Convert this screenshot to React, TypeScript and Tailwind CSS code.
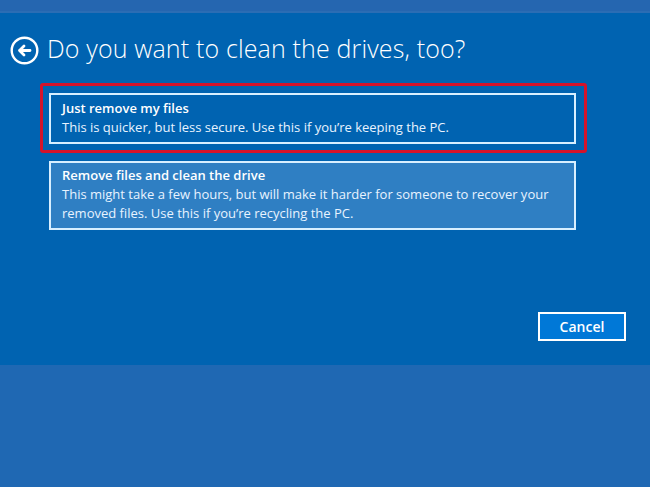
import React from 'react';

const options = [
  {
    id: 'quick',
    title: 'Just remove my files',
    lines: ["This is quicker, but less secure. Use this if you\u2019re keeping the PC."],
    selected: true,
  },
  {
    id: 'clean',
    title: 'Remove files and clean the drive',
    lines: [
      'This might take a few hours, but will make it harder for someone to recover your',
      'removed files. Use this if you\u2019re recycling the PC.',
    ],
    selected: false,
  },
];

const BackIcon = () => (
  <svg width="29" height="29" viewBox="0 0 29 29" fill="none" stroke="#ffffff" strokeWidth="2.4">
    <circle cx="14.5" cy="14.5" r="12.8" />
    <path d="M20 14.5H9.5M14 10L9.5 14.5L14 19" strokeLinecap="round" strokeLinejoin="round" strokeWidth="2.8" />
  </svg>
);

const App = () => {
  return (
    <div className="w-[650px] h-[487px] flex flex-col overflow-hidden font-['Open_Sans','Noto_Sans',sans-serif] text-white">
      <div className="h-[11px] bg-[#2566b0]" />
      <div className="h-[2px] bg-[#2b6db4]" />
      <div className="h-[352px] bg-[#0063b1] flex flex-col">
        <div className="flex items-center gap-[8px] ml-[10px] mt-[23px] h-[29px]">
          <BackIcon />
          <h1 className="-mt-[5px] text-[25px] font-light leading-none tracking-[0.15px] text-white">
            Do you want to clean the drives, too?
          </h1>
        </div>

        <div className="ml-[40px] mt-[18px] flex flex-col">
          {options.map((o) => (
            <div
              key={o.id}
              className={
                o.selected
                  ? 'w-[547px] border-[3px] border-[#d3132b] rounded-[3px] pl-[6px] pt-[7px] pb-[6px]'
                  : 'pl-[9px] pt-[8px]'
              }
            >
              <div
                className={
                  o.selected
                    ? 'w-[527px] border-2 border-[#d8efff] bg-[#0063b1] px-[11px] pt-[4px] pb-[5px]'
                    : 'w-[527px] border-2 border-[#d8efff] bg-[#2f7fc3] px-[11px] pt-[3px] pb-[5px]'
                }
              >
                <div className="text-[13px] font-semibold leading-[19px]">{o.title}</div>
                {o.lines.map((l) => (
                  <div key={l} className="text-[13px] leading-[19px] text-[#e8f3ff]">
                    {l}
                  </div>
                ))}
              </div>
            </div>
          ))}
        </div>

        <button className="mt-auto mb-[24px] mr-[24px] self-end w-[88px] h-[29px] border-2 border-white bg-[#0078d7] text-[14px] font-semibold text-white">
          Cancel
        </button>
      </div>
      <div className="flex-1 bg-[#1f68b3]" />
    </div>
  );
};

export default App;
